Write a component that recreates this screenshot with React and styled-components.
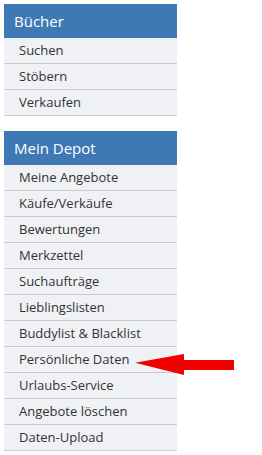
import React from "react";
import styled, { createGlobalStyle } from "styled-components";

const Global = createGlobalStyle`
  html, body { margin: 0; padding: 0; background: #fff; }
  body { font-family: "Open Sans", "Liberation Sans", sans-serif; }
`;

const Page = styled.div`
  padding: 4px;
  display: flex;
  flex-direction: column;
  gap: 15px;
`;

const Menu = styled.nav`
  width: 173px;
  display: flex;
  flex-direction: column;
`;

const Header = styled.div`
  height: 34px;
  background: #3e79b5;
  color: #fff;
  font-size: 15px;
  line-height: 34px;
  padding-left: 10px;
`;

const Row = styled.div`
  position: relative;
  height: 25px;
  line-height: 25px;
  background: #f0f1f5;
  border-bottom: 1px solid #cbcbcb;
  color: #333;
  font-size: 13px;
  padding-left: 15px;
  white-space: nowrap;
`;

const Arrow = styled.svg`
  position: absolute;
  left: 131px;
  top: 7px;
  width: 100px;
  height: 22px;
`;

const sections = [
  { title: "Bücher", items: ["Suchen", "Stöbern", "Verkaufen"] },
  {
    title: "Mein Depot",
    items: [
      "Meine Angebote",
      "Käufe/Verkäufe",
      "Bewertungen",
      "Merkzettel",
      "Suchaufträge",
      "Lieblingslisten",
      "Buddylist & Blacklist",
      "Persönliche Daten",
      "Urlaubs-Service",
      "Angebote löschen",
      "Daten-Upload",
    ],
  },
];

export default function App() {
  return (
    <>
      <Global />
      <Page>
        {sections.map((s) => (
          <Menu key={s.title}>
            <Header>{s.title}</Header>
            {s.items.map((it) => (
              <Row key={it}>
                {it}
                {it === "Persönliche Daten" && (
                  <Arrow viewBox="0 0 100 22">
                    <path d="M0 8.7 L49 0 L49 6 L99 6 L99 16 L49 16 L49 21 Z" fill="#f20000" />
                  </Arrow>
                )}
              </Row>
            ))}
          </Menu>
        ))}
      </Page>
    </>
  );
}
